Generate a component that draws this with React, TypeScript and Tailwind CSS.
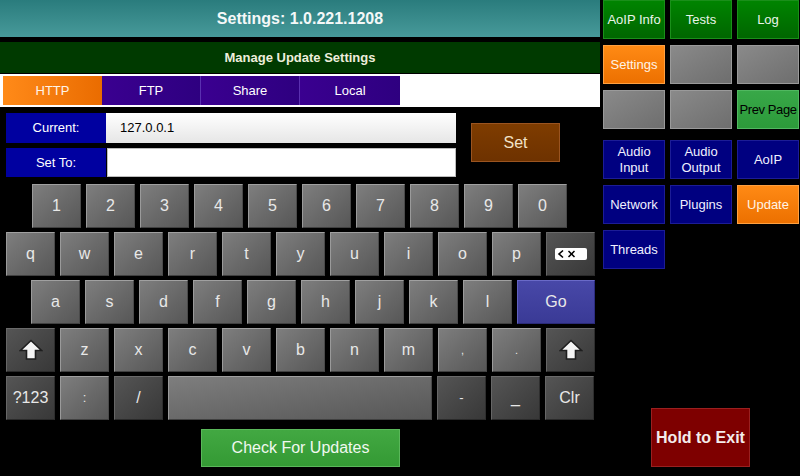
import type { ReactNode } from 'react'

type Variant = 'light' | 'dark' | 'go'

const keyStyles: Record<Variant, string> = {
  light:
    'bg-gradient-to-br from-[#7e7e7e] to-[#575757] border-t-[#a0a0a0] border-l-[#9a9a9a] border-r-[#4a4a4a] border-b-[#404040]',
  dark: 'bg-gradient-to-br from-[#555555] to-[#383838] border-t-[#6a6a6a] border-l-[#666666] border-r-[#2e2e2e] border-b-[#2a2a2a]',
  go: 'bg-gradient-to-b from-[#4848a8] to-[#3a3a96] border-t-[#6a6ac8] border-l-[#6060c0] border-r-[#2c2c80] border-b-[#2a2a78]',
}

function Key({
  children,
  variant = 'light',
  width = 'w-[49px]',
}: {
  children?: ReactNode
  variant?: Variant
  width?: string
}) {
  return (
    <div
      className={`${width} ${keyStyles[variant]} flex h-[44px] shrink-0 items-center justify-center border text-[16px] text-[#e8e8e8]`}
    >
      {children}
    </div>
  )
}

function ShiftIcon() {
  return (
    <svg width="24" height="22" viewBox="0 0 24 22">
      <polygon
        points="12,1.5 22.5,11.5 16.5,11.5 16.5,20 7.5,20 7.5,11.5 1.5,11.5"
        fill="#f4f4f4"
        stroke="#1e1e1e"
        strokeWidth="1.6"
        strokeLinejoin="miter"
      />
    </svg>
  )
}

function BackspaceIcon() {
  return (
    <svg width="32" height="12" viewBox="0 0 32 12">
      <rect x="0" y="0" width="32" height="12" rx="2" fill="#ffffff" />
      <polyline points="8,2.5 4,6 8,9.5" fill="none" stroke="#000" strokeWidth="1.6" />
      <line x1="13.5" y1="3" x2="19.5" y2="9" stroke="#000" strokeWidth="1.5" />
      <line x1="19.5" y1="3" x2="13.5" y2="9" stroke="#000" strokeWidth="1.5" />
    </svg>
  )
}

const panelStyles = {
  green: 'bg-gradient-to-b from-[#008400] to-[#006600] border-[#1a8f1a] text-[#eaf5ea]',
  orange: 'bg-gradient-to-b from-[#ff8a14] to-[#ec7000] border-[#ffa040] text-[#fff4e6]',
  gray: 'bg-gradient-to-br from-[#8a8a8a] to-[#6e6e6e] border-[#9a9a9a] text-white',
  prev: 'bg-gradient-to-b from-[#38a848] to-[#2c9a3a] border-[#50b860] text-black',
  blue: 'bg-[#000080] border-[#1c1c96] text-[#f0f0ff]',
}

function PanelButton({ label, tone }: { label?: ReactNode; tone: keyof typeof panelStyles }) {
  return (
    <div
      className={`${panelStyles[tone]} flex h-[39px] w-[62px] items-center justify-center overflow-hidden border text-center text-[13px] leading-[16px]`}
    >
      {label}
    </div>
  )
}

export default function App() {
  const nums = ['1', '2', '3', '4', '5', '6', '7', '8', '9', '0']
  const qRow = ['q', 'w', 'e', 'r', 't', 'y', 'u', 'i', 'o', 'p']
  const aRow = ['a', 's', 'd', 'f', 'g', 'h', 'j', 'k', 'l']
  const zRow = ['z', 'x', 'c', 'v', 'b', 'n', 'm']

  return (
    <div className="flex h-[476px] w-[800px] overflow-hidden bg-black font-['Liberation_Sans',Arial,sans-serif]">
      {/* Left side */}
      <div className="flex w-[600px] flex-col">
        <div className="flex h-[37px] items-center justify-center bg-gradient-to-b from-[#2a7c7d] to-[#479a9a] text-[16px] font-bold text-[#f4f8f8]">
          Settings: 1.0.221.1208
        </div>
        <div className="mt-[5px] flex h-[31px] items-center justify-center bg-[#003a00] text-[13px] font-bold text-[#eeeedc]">
          Manage Update Settings
        </div>
        <div className="mt-[1px] flex h-[33px] bg-white pl-[3px] pt-[2px]">
          <div className="flex h-[29px] w-[99px] items-center justify-center bg-gradient-to-r from-[#ff8a18] to-[#ea6c00] text-[13px] text-[#fff4e8]">
            HTTP
          </div>
          <div className="flex h-[29px] w-[99px] items-center justify-center border-r border-[#5a30b0] bg-gradient-to-r from-[#3a0090] to-[#2e0080] text-[13px] text-white">
            FTP
          </div>
          <div className="flex h-[29px] w-[99px] items-center justify-center border-r border-[#5a30b0] bg-gradient-to-r from-[#3a0090] to-[#2e0080] text-[13px] text-white">
            Share
          </div>
          <div className="flex h-[29px] w-[100px] items-center justify-center bg-gradient-to-r from-[#3a0090] to-[#2e0080] text-[13px] text-white">
            Local
          </div>
        </div>

        {/* Address rows */}
        <div className="mt-[6px] flex">
          <div className="flex flex-col gap-[5px] pl-[6px]">
            <div className="flex h-[30px]">
              <div className="flex w-[100px] items-center justify-center bg-[#0000a0] text-[13px] text-white">Current:</div>
              <div className="flex w-[350px] items-center bg-gradient-to-b from-white to-[#e6e6e6] pl-[14px] text-[13px] text-black">
                127.0.0.1
              </div>
            </div>
            <div className="flex h-[29px]">
              <div className="flex w-[100px] items-center justify-center bg-[#0000a0] text-[13px] text-white">Set To:</div>
              <div className="ml-[1px] w-[349px] border border-[#bdbdbd] bg-white" />
            </div>
          </div>
          <div className="ml-[15px] mt-[10px] flex h-[39px] w-[89px] items-center justify-center border border-[#9a5420] bg-gradient-to-b from-[#7e3c00] to-[#6e3200] text-[16px] text-[#f2e2c8]">
            Set
          </div>
        </div>

        {/* Keyboard */}
        <div className="mt-[7px] flex flex-col gap-[4px]">
          <div className="flex gap-[5px] pl-[32px]">
            {nums.map((k) => (
              <Key key={k}>{k}</Key>
            ))}
          </div>
          <div className="flex gap-[5px] pl-[6px]">
            {qRow.map((k) => (
              <Key key={k}>{k}</Key>
            ))}
            <Key variant="dark">
              <BackspaceIcon />
            </Key>
          </div>
          <div className="flex gap-[5px] pl-[31px]">
            {aRow.map((k) => (
              <Key key={k}>{k}</Key>
            ))}
            <Key variant="go" width="w-[78px]">
              Go
            </Key>
          </div>
          <div className="flex gap-[5px] pl-[6px]">
            <Key variant="dark">
              <ShiftIcon />
            </Key>
            {zRow.map((k) => (
              <Key key={k}>{k}</Key>
            ))}
            <Key>
              <span className="text-[11px]">,</span>
            </Key>
            <Key>
              <span className="text-[11px]">.</span>
            </Key>
            <Key variant="dark">
              <ShiftIcon />
            </Key>
          </div>
          <div className="flex gap-[5px] pl-[6px]">
            <Key variant="dark">?123</Key>
            <Key>
              <span className="text-[13px]">:</span>
            </Key>
            <Key variant="dark">/</Key>
            <Key width="w-[264px]" />
            <Key variant="dark">
              <span className="text-[13px]">-</span>
            </Key>
            <Key variant="dark">_</Key>
            <Key variant="dark">Clr</Key>
          </div>
        </div>

        <div className="ml-[201px] mt-[9px] flex h-[38px] w-[199px] items-center justify-center border border-[#5ab85a] bg-gradient-to-b from-[#42a842] to-[#349a34] text-[16px] text-[#f0f8f0]">
          Check For Updates
        </div>
      </div>

      {/* Right panel */}
      <div className="flex w-[200px] flex-col pl-[3px]">
        <div className="grid grid-cols-[62px_62px_62px] gap-x-[5px] gap-y-[6px]">
          <PanelButton tone="green" label="AoIP Info" />
          <PanelButton tone="green" label="Tests" />
          <PanelButton tone="green" label="Log" />
          <PanelButton tone="orange" label="Settings" />
          <PanelButton tone="gray" />
          <PanelButton tone="gray" />
          <PanelButton tone="gray" />
          <PanelButton tone="gray" />
          <PanelButton tone="prev" label={<span className="whitespace-nowrap tracking-[-0.4px]">Prev Page</span>} />
        </div>
        <div className="mt-[11px] grid grid-cols-[62px_62px_62px] gap-x-[5px] gap-y-[6px]">
          <PanelButton
            tone="blue"
            label={
              <>
                Audio
                <br />
                Input
              </>
            }
          />
          <PanelButton
            tone="blue"
            label={
              <>
                Audio
                <br />
                Output
              </>
            }
          />
          <PanelButton tone="blue" label="AoIP" />
          <PanelButton tone="blue" label="Network" />
          <PanelButton tone="blue" label="Plugins" />
          <PanelButton tone="orange" label="Update" />
          <PanelButton tone="blue" label="Threads" />
        </div>
        <div className="ml-[48px] mt-[139px] flex h-[59px] w-[99px] items-center justify-center border border-[#9a2020] bg-[#7e0000] text-[16px] font-bold text-[#f4ecec]">
          Hold to Exit
        </div>
      </div>
    </div>
  )
}
